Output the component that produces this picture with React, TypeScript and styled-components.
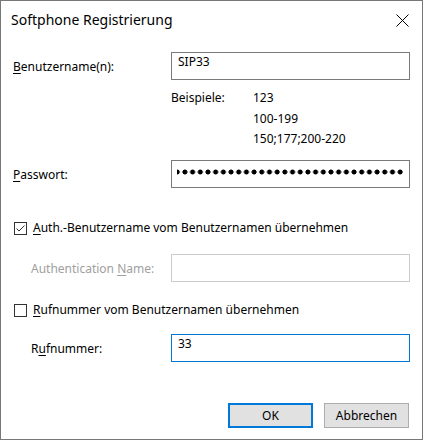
import React from "react";
import styled, { createGlobalStyle } from "styled-components";

const Global = createGlobalStyle`
  html, body { margin: 0; padding: 0; background: #ffffff; }
  body { font-family: "Noto Sans", "Open Sans", sans-serif; font-size: 12px; color: #000; }
`;

const Window = styled.div`
  box-sizing: border-box;
  width: 423px;
  height: 440px;
  border: 1px solid #777777;
  background: #ffffff;
  display: flex;
  flex-direction: column;
`;

const TitleBar = styled.div`
  height: 37px;
  display: flex;
  align-items: center;
  justify-content: space-between;
  padding: 0 13px 0 10px;
`;

const Title = styled.div`
  font-size: 14px;
  line-height: 18px;
  color: #000;
  padding-top: 1px;
`;

const CloseIcon = styled.svg`
  width: 13px;
  height: 13px;
  display: block;
  margin-top: 1px;
`;

const Body = styled.div`
  flex: 1;
  display: flex;
  flex-direction: column;
  padding: 14px 12px 0 12px;
`;

const FieldRow = styled.div<{ $mt?: number; $indent?: number }>`
  display: grid;
  grid-template-columns: 158px 239px;
  align-items: center;
  margin-top: ${(p) => p.$mt ?? 0}px;
  & > label {
    padding-left: ${(p) => p.$indent ?? 0}px;
  }
`;

const Label = styled.label<{ $disabled?: boolean }>`
  line-height: 16px;
  color: ${(p) => (p.$disabled ? "#a0a0a0" : "#000")};
  white-space: nowrap;
  padding-top: 1px;
`;

const Acc = styled.span`
  text-decoration: underline;
  text-underline-offset: 2px;
  text-decoration-thickness: 1px;
`;

const TextBox = styled.div<{ $state?: "normal" | "focus" | "disabled" }>`
  box-sizing: border-box;
  height: 28px;
  border: 1px solid
    ${(p) =>
      p.$state === "focus" ? "#0078d7" : p.$state === "disabled" ? "#cccccc" : "#7a7a7a"};
  background: #fff;
  padding: 1px 6px 0 6px;
  line-height: 16px;
  white-space: nowrap;
  overflow: hidden;
`;

const PasswordBox = styled(TextBox)`
  display: flex;
  align-items: flex-start;
  padding: 0 5px 0 5px;
`;

const Dots = styled.div`
  flex: 1;
  height: 6px;
  margin-top: 8px;
  background-image: radial-gradient(circle at center, #000 0 2.2px, rgba(0, 0, 0, 0) 2.8px);
  background-size: 7.7px 6px;
  background-repeat: repeat-x;
  background-position: right center;
`;

const Examples = styled.div`
  display: grid;
  grid-template-columns: 82px auto;
  margin: 8px 0 0 158px;
  line-height: 20.5px;
`;

const ExampleValues = styled.div`
  display: flex;
  flex-direction: column;
`;

const CheckRow = styled.label<{ $mt: number }>`
  display: flex;
  align-items: center;
  gap: 6px;
  margin-top: ${(p) => p.$mt}px;
  line-height: 16px;
  white-space: nowrap;
  padding-left: 1px;
`;

const CheckBox = styled.span`
  box-sizing: border-box;
  width: 13px;
  height: 13px;
  border: 1px solid #333333;
  background: #fff;
  display: flex;
  align-items: center;
  justify-content: center;
  flex: none;
`;

const ButtonBar = styled.div`
  display: flex;
  justify-content: flex-end;
  gap: 11px;
  margin-top: 41px;
  padding-right: 1px;
`;

const Button = styled.button<{ $default?: boolean }>`
  box-sizing: border-box;
  width: 85px;
  height: 25px;
  margin: 0;
  padding: 0;
  font-family: "Noto Sans", "Open Sans", sans-serif;
  font-size: 12px;
  line-height: 16px;
  color: #000;
  background: #e1e1e1;
  border: ${(p) => (p.$default ? "2px solid #0078d7" : "1px solid #adadad")};
  border-radius: 0;
`;

function Check({ checked }: { checked: boolean }) {
  return (
    <CheckBox>
      {checked && (
        <svg width="11" height="11" viewBox="0 0 11 11">
          <path d="M1.5 5.5 L4 8 L9.5 2.5" fill="none" stroke="#333" strokeWidth="1" />
        </svg>
      )}
    </CheckBox>
  );
}

export default function App() {
  return (
    <>
      <Global />
      <Window>
        <TitleBar>
          <Title>Softphone Registrierung</Title>
          <CloseIcon viewBox="0 0 13 13">
            <path d="M0.5 0.5 L12.5 12.5 M12.5 0.5 L0.5 12.5" stroke="#000" strokeWidth="1" fill="none" />
          </CloseIcon>
        </TitleBar>
        <Body>
          <FieldRow>
            <Label>
              <Acc>B</Acc>enutzername(n):
            </Label>
            <TextBox>SIP33</TextBox>
          </FieldRow>
          <Examples>
            <span>Beispiele:</span>
            <ExampleValues>
              <span>123</span>
              <span>100-199</span>
              <span>150;177;200-220</span>
            </ExampleValues>
          </Examples>
          <FieldRow $mt={10.5}>
            <Label>
              <Acc>P</Acc>asswort:
            </Label>
            <PasswordBox>
              <Dots />
            </PasswordBox>
          </FieldRow>
          <CheckRow $mt={32}>
            <Check checked />
            <span>
              <Acc>A</Acc>uth.-Benutzername vom Benutzernamen übernehmen
            </span>
          </CheckRow>
          <FieldRow $mt={18} $indent={18}>
            <Label $disabled>
              Authentication <Acc>N</Acc>ame:
            </Label>
            <TextBox $state="disabled" />
          </FieldRow>
          <CheckRow $mt={20}>
            <Check checked={false} />
            <span>
              <Acc>R</Acc>ufnummer vom Benutzernamen übernehmen
            </span>
          </CheckRow>
          <FieldRow $mt={16} $indent={18}>
            <Label>
              R<Acc>u</Acc>fnummer:
            </Label>
            <TextBox $state="focus">33</TextBox>
          </FieldRow>
          <ButtonBar>
            <Button $default>OK</Button>
            <Button>Abbrechen</Button>
          </ButtonBar>
        </Body>
      </Window>
    </>
  );
}
